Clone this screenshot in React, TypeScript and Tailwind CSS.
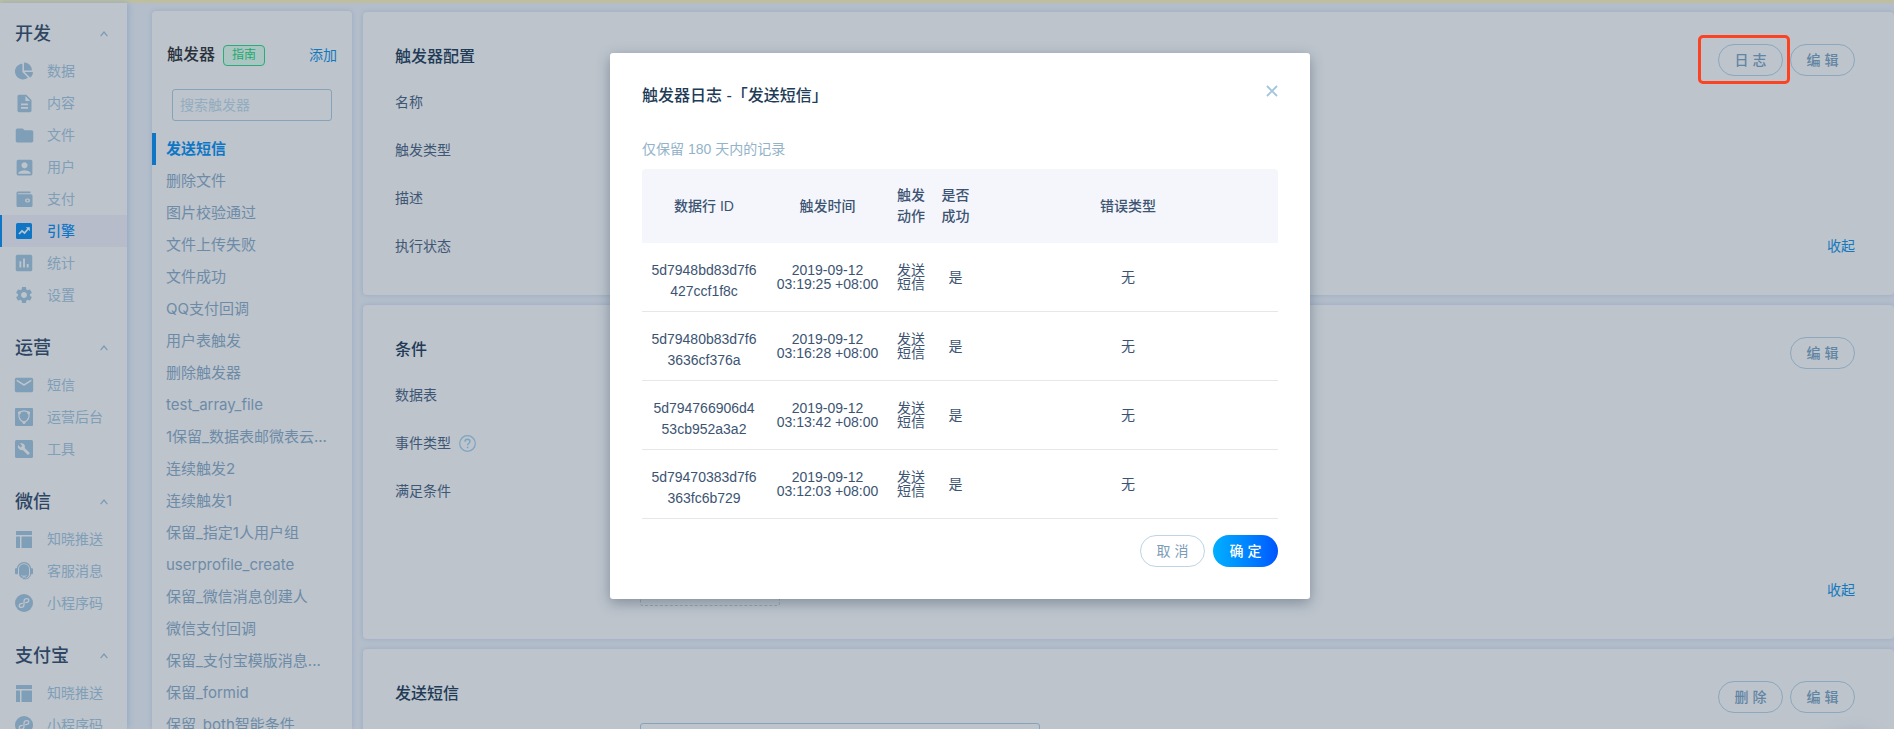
import type { ReactNode } from "react";
import { MdAccountBox, MdDescription, MdEmail, MdFolder, MdInsertChart, MdSettings } from "react-icons/md";
import { FaChartPie } from "react-icons/fa";

type NavItem = { label: string; icon: ReactNode; active?: boolean };
type NavGroup = { title: string; items: NavItem[] };

const WalletIcon = () => (
  <svg width="17" height="17" viewBox="0 0 17 17" aria-hidden="true">
    <path fill="currentColor" d="M2 .5h12.500v1.700H2.300a.5.5 0 0 0 0 1H15a1.500 1.500 0 0 1 1.500 1.500V14.500a1.500 1.500 0 0 1-1.500 1.500H2A1.500 1.500 0 0 1 .5 14.500V2A1.500 1.500 0 0 1 2 .5z" />
    <rect x="9" y="7.500" width="5" height="4" rx="2" fill="#bdc4cc" />
    <circle cx="11.500" cy="9.500" r="1" fill="currentColor" />
  </svg>
);

const TrendIcon = () => (
  <svg width="16" height="16" viewBox="0 0 16 16" aria-hidden="true">
    <rect width="16" height="16" rx="1.500" fill="currentColor" />
    <path d="M3 11l3-3.200 2.600 2.200 3.600-4.200" fill="none" stroke="#bdc4cc" strokeWidth="1.700" />
    <path d="M9.800 4.200h4v4z" fill="#bdc4cc" />
  </svg>
);

const ConsoleIcon = () => (
  <svg width="18" height="18" viewBox="0 0 18 18" aria-hidden="true">
    <rect width="18" height="18" rx="1" fill="currentColor" />
    <path d="M4.200 4.600C3.200 9 4.500 12.500 9 14.500c4.500-2 5.800-5.500 4.800-9.900-2.800-2-6.800-2-9.600 0z" fill="none" stroke="#bdc4cc" strokeWidth="1.200" />
    <circle cx="4.400" cy="4.800" r="1.500" fill="#bdc4cc" />
    <circle cx="13.600" cy="4.800" r="1.500" fill="#bdc4cc" />
    <circle cx="9" cy="14.500" r="1.500" fill="#bdc4cc" />
  </svg>
);

const ToolIcon = () => (
  <svg width="18" height="18" viewBox="0 0 18 18" aria-hidden="true">
    <rect width="18" height="18" rx="1.500" fill="currentColor" />
    <path d="M14.600 12.700L9.700 7.900c.5-1.200.2-2.700-.8-3.700-1.100-1.100-2.700-1.300-4-.7l2.300 2.300-1.600 1.600-2.400-2.300c-.6 1.300-.3 2.900.8 4 1 1 2.500 1.300 3.700.8l4.900 4.800c.2.200.5.200.7 0l1.300-1.200c.2-.2.200-.6 0-.8z" fill="#bdc4cc" />
  </svg>
);

const LayoutIcon = () => (
  <svg width="16" height="17" viewBox="0 0 16 17" aria-hidden="true">
    <rect width="16" height="4" rx=".5" fill="currentColor" />
    <rect y="5.500" width="4" height="11.500" rx=".5" fill="currentColor" />
    <rect x="5.500" y="5.500" width="10.500" height="11.500" rx=".5" fill="currentColor" />
  </svg>
);

const HeadsetIcon = () => (
  <svg width="18" height="18" viewBox="0 0 18 18" aria-hidden="true">
    <path d="M2.400 7C2.400 3.300 5.400.7 9 .7S15.600 3.300 15.600 7" fill="none" stroke="currentColor" strokeWidth="1.300" />
    <path d="M4 7c0-2.800 2.200-4.700 5-4.700S14 4.200 14 7v4.500c0 2.800-2.200 5-5 5s-5-2.200-5-5z" fill="currentColor" />
    <rect y="6.300" width="3" height="6" rx="1" fill="currentColor" />
    <rect x="15" y="6.300" width="3" height="6" rx="1" fill="currentColor" />
    <path d="M15.600 12c0 2.800-2.400 5-5.600 5" fill="none" stroke="currentColor" strokeWidth="1" />
    <path d="M6.500 13.400c1.500 1.200 3.500 1.200 5 0" fill="none" stroke="#bdc4cc" strokeWidth="1" />
    <ellipse cx="9.300" cy="16.300" rx="2" ry="1.200" fill="currentColor" stroke="#bdc4cc" strokeWidth=".6" />
  </svg>
);

const MiniProgramIcon = () => (
  <svg width="18" height="18" viewBox="0 0 18 18" aria-hidden="true">
    <circle cx="9" cy="9" r="9" fill="currentColor" />
    <path d="M7.400 9.300c-1.900.1-3.200 1.100-3.200 2.400 0 1 .9 1.700 2 1.700 1.700 0 2.800-1.100 2.800-2.600V7.200c0-1.500 1.100-2.600 2.800-2.600 1.100 0 2 .7 2 1.700 0 1.300-1.300 2.300-3.200 2.400" fill="none" stroke="#bdc4cc" strokeWidth="1.300" strokeLinecap="round" />
  </svg>
);

const groups: NavGroup[] = [
  {
    title: "开发",
    items: [
      { label: "数据", icon: <FaChartPie size={18} /> },
      { label: "内容", icon: <MdDescription size={21} /> },
      { label: "文件", icon: <MdFolder size={21} /> },
      { label: "用户", icon: <MdAccountBox size={21} /> },
      { label: "支付", icon: <WalletIcon /> },
      { label: "引擎", icon: <TrendIcon />, active: true },
      { label: "统计", icon: <MdInsertChart size={22} /> },
      { label: "设置", icon: <MdSettings size={20} /> },
    ],
  },
  {
    title: "运营",
    items: [
      { label: "短信", icon: <MdEmail size={22} /> },
      { label: "运营后台", icon: <ConsoleIcon /> },
      { label: "工具", icon: <ToolIcon /> },
    ],
  },
  {
    title: "微信",
    items: [
      { label: "知晓推送", icon: <LayoutIcon /> },
      { label: "客服消息", icon: <HeadsetIcon /> },
      { label: "小程序码", icon: <MiniProgramIcon /> },
    ],
  },
  {
    title: "支付宝",
    items: [
      { label: "知晓推送", icon: <LayoutIcon /> },
      { label: "小程序码", icon: <MiniProgramIcon /> },
    ],
  },
];

const triggers = [
  "发送短信",
  "删除文件",
  "图片校验通过",
  "文件上传失败",
  "文件成功",
  "QQ支付回调",
  "用户表触发",
  "删除触发器",
  "test_array_file",
  "1保留_数据表邮微表云...",
  "连续触发2",
  "连续触发1",
  "保留_指定1人用户组",
  "userprofile_create",
  "保留_微信消息创建人",
  "微信支付回调",
  "保留_支付宝模版消息...",
  "保留_formid",
  "保留_both智能条件",
];

const logs = [
  { id: ["5d7948bd83d7f6", "427ccf1f8c"], time: "03:19:25 +08:00" },
  { id: ["5d79480b83d7f6", "3636cf376a"], time: "03:16:28 +08:00" },
  { id: ["5d794766906d4", "53cb952a3a2"], time: "03:13:42 +08:00" },
  { id: ["5d79470383d7f6", "363fc6b729"], time: "03:12:03 +08:00" },
];

function Sidebar() {
  return (
    <aside className="z-10 w-[127px] shrink-0 bg-[#bdc4cc] pt-[10px] shadow-[1px_0_6px_#8fa9c4]">
      <nav>
        {groups.map((group) => (
          <section key={group.title} className="mb-4">
            <h2 className="flex h-[42px] items-center justify-between pr-[19px] pl-[15px] text-[18px] font-medium text-[#2e4663]">
              {group.title}
              <svg width="8" height="6" viewBox="0 0 8 6" aria-hidden="true">
                <path d="M.6 5.200L4 1l3.400 4.200" fill="none" stroke="#7b9ab3" strokeWidth="1.200" />
              </svg>
            </h2>
            <ul>
              {group.items.map((item) => (
                <li key={item.label}>
                  <a
                    href="#"
                    className={
                      item.active
                        ? "flex h-8 items-center border-l-2 border-[#0f76c6] bg-[#b6bcca] pl-[11px] text-sm font-medium text-[#0f76c6]"
                        : "flex h-8 items-center pl-[13px] text-sm text-[#7f9eb7]"
                    }
                  >
                    <span className="mr-3 flex w-[22px] shrink-0 justify-center">{item.icon}</span>
                    {item.label}
                  </a>
                </li>
              ))}
            </ul>
          </section>
        ))}
      </nav>
    </aside>
  );
}

function TriggerList() {
  return (
    <section className="mt-2 ml-[25px] w-[200px] shrink-0 self-stretch rounded-t bg-[#bdc4cc] shadow-[0_0_4px_#93aac3]">
      <header className="flex h-[88px] items-center pr-[15px] pl-[15px]">
        <h1 className="text-base font-medium text-[#2a323c]">触发器</h1>
        <a href="#" className="ml-2 flex h-[21px] w-[42px] items-center justify-center rounded border border-[#2bab78] bg-[#abc6c2] text-xs text-[#1fa870]">
          指南
        </a>
        <a href="#" className="ml-auto text-sm text-[#1379bd]">添加</a>
      </header>
      <div className="mx-5 -mt-[10px]">
        <input
          type="text"
          aria-label="搜索触发器"
          placeholder="搜索触发器"
          className="h-8 w-full rounded-[3px] border border-[#86a3ba] bg-transparent px-[7px] text-sm outline-none placeholder:text-[#93acc0]"
        />
      </div>
      <ul className="mt-3 font-['Inter','Noto_Sans_CJK_SC',sans-serif]">
        {triggers.map((name, i) => (
          <li key={name}>
            <a
              href="#"
              className={
                i === 0
                  ? "flex h-8 items-center border-l-4 border-[#0f76c6] pl-[10px] text-[15px] font-bold whitespace-nowrap text-[#0f76c6]"
                  : "flex h-8 items-center pl-[14px] text-[15px] whitespace-nowrap text-[#6d8ba7]"
              }
            >
              {name}
            </a>
          </li>
        ))}
      </ul>
    </section>
  );
}

function OutlineButton({ children }: { children: ReactNode }) {
  return (
    <button type="button" className="h-8 w-[65px] rounded-full border border-[#8ba8be] text-sm font-medium text-[#6285a3]">
      {children}
    </button>
  );
}

function Card({ title, actions, children }: { title: string; actions: ReactNode; children?: ReactNode }) {
  return (
    <section className="rounded bg-[#bdc4cc] pt-8 pr-[39px] pl-8 shadow-[0_0_4px_#93aac3]">
      <header className="mb-2 flex h-[26px] items-center justify-between">
        <h2 className="text-base font-medium text-[#213b57]">{title}</h2>
        <div className="mt-[6px] flex gap-[7px]">{actions}</div>
      </header>
      {children}
    </section>
  );
}

function Row({ label, children }: { label: string; children?: ReactNode }) {
  return (
    <div className="flex h-12 items-center text-sm text-[#3e5775]">
      {label}
      {children}
    </div>
  );
}

const HelpIcon = () => (
  <svg className="ml-2" width="17" height="17" viewBox="0 0 17 17" aria-hidden="true">
    <circle cx="8.500" cy="8.500" r="7.800" fill="none" stroke="#7da4c1" strokeWidth="1.200" />
    <path d="M6 6.800c0-1.500 1.100-2.500 2.500-2.500S11 5.200 11 6.500c0 1.600-2.400 1.900-2.400 3.700" fill="none" stroke="#7da4c1" strokeWidth="1.400" />
    <circle cx="8.600" cy="12.400" r=".9" fill="#7da4c1" />
  </svg>
);

const CollapseLink = () => (
  <a href="#" className="ml-auto text-sm text-[#1379bd]">收起</a>
);

function LogDialog() {
  return (
    <div
      role="dialog"
      aria-labelledby="log-title"
      className="w-[700px] rounded-[3px] bg-white px-8 pt-[30px] pb-8 shadow-[0_4px_14px_rgba(40,60,80,0.4)]"
    >
      <header className="flex h-[26px] items-center justify-between">
        <h2 id="log-title" className="text-base font-medium text-[#213b57]">触发器日志 -「发送短信」</h2>
        <button type="button" aria-label="关闭" className="-mt-[10px]">
          <svg width="12" height="12" viewBox="0 0 12 12" aria-hidden="true">
            <path d="M1 1l10 10M11 1L1 11" stroke="#a3c6de" strokeWidth="1.900" />
          </svg>
        </button>
      </header>
      <p className="mt-[30px] text-sm leading-5 text-[#93b3c9]">仅保留 180 天内的记录</p>
      <table className="mt-[10px] w-full table-fixed border-separate border-spacing-0 text-center text-sm text-[#3c5472]">
        <colgroup>
          <col className="w-[124px]" />
          <col className="w-[123px]" />
          <col className="w-[44px]" />
          <col className="w-[45px]" />
          <col />
        </colgroup>
        <thead>
          <tr className="h-[74px] leading-[21px]">
            <th className="rounded-tl bg-[#f5f6fc] font-medium">数据行 ID</th>
            <th className="bg-[#f5f6fc] font-medium">触发时间</th>
            <th className="bg-[#f5f6fc] font-medium">触发<br />动作</th>
            <th className="bg-[#f5f6fc] font-medium">是否<br />成功</th>
            <th className="rounded-tr bg-[#f5f6fc] font-medium">错误类型</th>
          </tr>
        </thead>
        <tbody>
          {logs.map((log) => (
            <tr key={log.time} className="h-[69px] leading-[14px]">
              <td className="border-b border-[#e6e7e9] pt-2 leading-[21px]">{log.id[0]}<br />{log.id[1]}</td>
              <td className="border-b border-[#e6e7e9]">2019-09-12<br />{log.time}</td>
              <td className="border-b border-[#e6e7e9]">发送<br />短信</td>
              <td className="border-b border-[#e6e7e9]">是</td>
              <td className="border-b border-[#e6e7e9]">无</td>
            </tr>
          ))}
        </tbody>
      </table>
      <footer className="mt-4 flex justify-end gap-2">
        <button type="button" className="h-8 w-[65px] rounded-full border border-[#bdd5e4] text-sm text-[#7b9cb8]">取 消</button>
        <button type="button" className="h-8 w-[65px] rounded-full bg-linear-to-r from-[#00b0ff] to-[#0055ff] text-sm font-medium text-white">确 定</button>
      </footer>
    </div>
  );
}

export default function App() {
  return (
    <div className="relative flex h-screen flex-col overflow-hidden bg-[#b4bdca] font-['Liberation_Sans','Noto_Sans_CJK_SC',sans-serif]">
      <div className="h-[3px] shrink-0 bg-[#bfbf9f]" />
      <div className="flex min-h-0 flex-1">
        <Sidebar />
        <TriggerList />
        <main className="mt-[9px] ml-[11px] flex min-w-0 flex-1 flex-col gap-[10px]">
          <Card
            title="触发器配置"
            actions={
              <>
                <div className="relative flex">
                  <OutlineButton>日 志</OutlineButton>
                  <span className="pointer-events-none absolute -top-[9px] -right-[7px] -bottom-2 -left-5 rounded-[5px] border-3 border-[#fb4323]" />
                </div>
                <OutlineButton>编 辑</OutlineButton>
              </>
            }
          >
            <div className="pb-[25px]">
              <Row label="名称" />
              <Row label="触发类型" />
              <Row label="描述" />
              <Row label="执行状态"><CollapseLink /></Row>
            </div>
          </Card>
          <Card title="条件" actions={<OutlineButton>编 辑</OutlineButton>}>
            <Row label="数据表" />
            <Row label="事件类型"><HelpIcon /></Row>
            <Row label="满足条件" />
            <div className="mt-[59px] flex items-center pb-[33px] pl-[245px]">
              <button type="button" aria-label="添加条件" className="h-8 w-[140px] rounded-[3px] border border-dashed border-[#98a5b3]" />
              <CollapseLink />
            </div>
          </Card>
          <Card
            title="发送短信"
            actions={
              <>
                <OutlineButton>删 除</OutlineButton>
                <OutlineButton>编 辑</OutlineButton>
              </>
            }
          >
            <div className="mt-4 pb-8 pl-[245px]">
              <input type="text" aria-label="短信内容" className="h-8 w-[400px] rounded-[3px] border border-[#86a3ba] bg-transparent" />
            </div>
          </Card>
        </main>
      </div>
      <div className="absolute right-3 -bottom-16 h-14 w-14 rounded-full shadow-[0_0_20px_#8f9db5]" />
      <div className="absolute inset-0 z-20 flex items-start justify-center overflow-hidden pt-[53px] pl-[26px]">
        <LogDialog />
      </div>
    </div>
  );
}
